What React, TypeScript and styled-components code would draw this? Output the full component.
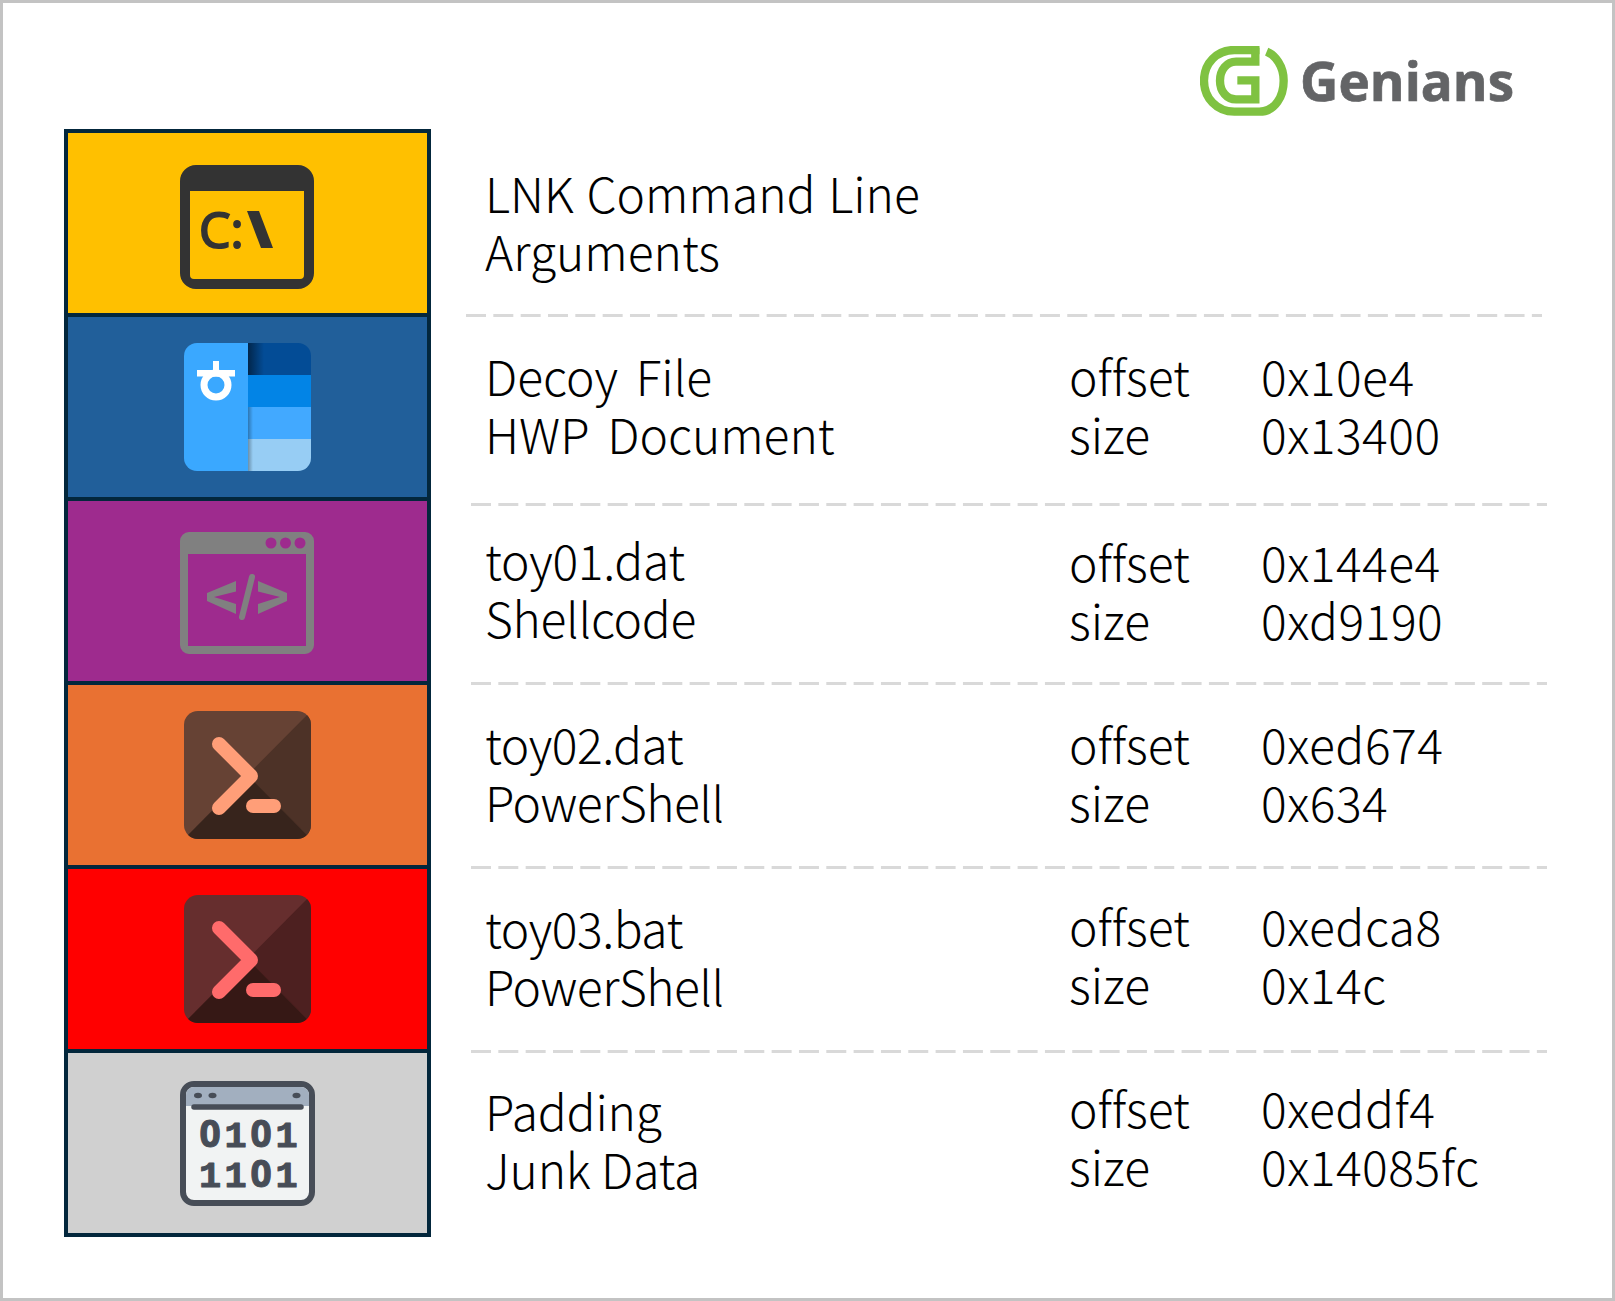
import React from "react";
import styled, { createGlobalStyle } from "styled-components";

const Global = createGlobalStyle`
  html, body { margin: 0; padding: 0; background: #fff; }
  body { font-family: "Noto Sans CJK KR", "Open Sans", sans-serif; }
`;

const Page = styled.div`
  width: 1615px;
  height: 1301px;
  box-sizing: border-box;
  border: 3px solid #c3c3c3;
  background: #fff;
  display: flex;
  flex-direction: column;
`;

const Header = styled.header`
  height: 126px;
  flex: none;
  display: flex;
  justify-content: flex-end;
  padding: 43px 98px 0 0;
  box-sizing: border-box;
`;

const Body = styled.main`
  display: flex;
  align-items: flex-start;
  padding-left: 61px;
`;

const Stack = styled.div`
  width: 367px;
  flex: none;
  box-sizing: border-box;
  border: 4px solid #03273c;
  background: #03273c;
  display: flex;
  flex-direction: column;
  gap: 4px;
`;

const Cell = styled.div<{ $bg: string; $down: number; $left: number }>`
  height: 180px;
  box-sizing: border-box;
  padding: ${(p) => p.$down * 2}px ${(p) => p.$left}px 0 0;
  background: ${(p) => p.$bg};
  display: flex;
  align-items: center;
  justify-content: center;
`;

const Details = styled.div`
  flex: 1;
  display: flex;
  flex-direction: column;
  padding-left: 35px;
`;

const Row = styled.div<{ $h: number }>`
  height: ${(p) => p.$h}px;
  box-sizing: border-box;
  width: 1076px;
  display: grid;
  grid-template-columns: 583px 192px 1fr;
`;

const Dash = styled.svg<{ $nudge: number }>`
  display: block;
  width: 1076px;
  height: 3px;
  margin-left: ${(p) => p.$nudge}px;
  flex: none;
`;

const Lines = styled.div<{ $top: number; $pad: number; $track?: number; $ws?: number }>`
  padding-top: ${(p) => p.$top}px;
  padding-left: ${(p) => p.$pad}px;
  font-family: "Noto Sans CJK KR", "Open Sans", sans-serif;
  font-size: 48px;
  font-weight: 300;
  line-height: 58px;
  letter-spacing: ${(p) => p.$track ?? 0}px;
  word-spacing: ${(p) => p.$ws ?? 0}px;
  font-variant-ligatures: none;
  color: #000;
  white-space: pre;
`;

const Logo = styled.div`
  display: flex;
  align-items: center;
  gap: 12px;
  height: 70px;
`;

const Wordmark = styled.span`
  font-family: "Open Sans", sans-serif;
  font-weight: 700;
  font-size: 53px;
  line-height: 70px;
  color: #636466;
  -webkit-text-stroke: 0.7px #636466;
`;

const Svg = styled.svg`
  display: block;
`;

const GeniansMark = () => (
  <Svg width="88" height="70" viewBox="0 0 264 210" fill="none" stroke="#7fc241" strokeWidth="25">
    <path d="M166 0V12H103C50 12 12 52 12 104S50 197 103 197H178C226 197 251 150 251 104C251 60 226 28 200 17" />
    <path d="M166 5V47H108C80 47 60 72 60 104S80 160 108 160H166V103H112" />
  </Svg>
);

const CmdIcon = () => (
  <Svg width="134" height="124" viewBox="0 0 134 124">
    <path
      fillRule="evenodd"
      fill="#333333"
      d="M16 0H118A16 16 0 0 1 134 16V108A16 16 0 0 1 118 124H16A16 16 0 0 1 0 108V16A16 16 0 0 1 16 0ZM10 26V110A4 4 0 0 0 14 114H120A4 4 0 0 0 124 110V26Z"
    />
    <text x="19" y="83" fontFamily="'Open Sans', sans-serif" fontWeight="400" fontSize="50" fill="#333333" stroke="#333333" strokeWidth="2">C:</text>
    <path d="M67 46H79L93 83H81Z" fill="#333333" />
  </Svg>
);

const HwpIcon = () => (
  <Svg width="127" height="128" viewBox="0 0 127 128">
    <defs>
      <linearGradient id="sh1" x1="0" x2="1" y1="0" y2="0">
        <stop offset="0" stopColor="#000" stopOpacity="0.5" />
        <stop offset="1" stopColor="#000" stopOpacity="0" />
      </linearGradient>
      <clipPath id="round">
        <rect width="127" height="128" rx="13" />
      </clipPath>
    </defs>
    <g clipPath="url(#round)">
      <rect x="64" y="0" width="63" height="32" fill="#034c96" />
      <rect x="64" y="32" width="63" height="32" fill="#0284e6" />
      <rect x="64" y="64" width="63" height="32" fill="#42a9ff" />
      <rect x="64" y="96" width="63" height="32" fill="#97cdf4" />
      <rect x="64" y="0" width="16" height="32" fill="url(#sh1)" />
      <rect x="64" y="64" width="5" height="64" fill="url(#sh1)" opacity="0.6" />
      <rect x="0" y="0" width="64" height="128" fill="#3aa8ff" />
    </g>
    <rect x="29" y="18" width="6" height="10" fill="#fff" />
    <rect x="13" y="27" width="38" height="6.500" fill="#fff" />
    <circle cx="32" cy="42" r="12" fill="none" stroke="#fff" strokeWidth="7" />
  </Svg>
);

const CodeIcon = () => (
  <Svg width="134" height="122" viewBox="0 0 134 122">
    <path
      fillRule="evenodd"
      fill="#808080"
      d="M9 0H125A9 9 0 0 1 134 9V113A9 9 0 0 1 125 122H9A9 9 0 0 1 0 113V9A9 9 0 0 1 9 0ZM8 22V114H126V22Z"
    />
    <circle cx="91" cy="11" r="5.500" fill="#9e2b8e" />
    <circle cx="105.500" cy="11" r="5.500" fill="#9e2b8e" />
    <circle cx="120" cy="11" r="5.500" fill="#9e2b8e" />
    <path d="M56 49V59.500L34 65L56 72V82L27 69V61Z" fill="#808080" />
    <path d="M78 49V59.500L100 65L78 72V82L107 69V61Z" fill="#808080" />
    <path d="M72 45L62 85" stroke="#808080" strokeWidth="6" strokeLinecap="round" />
  </Svg>
);

const ShellIcon = ({ a, b, c, fg, id }: { a: string; b: string; c: string; fg: string; id: string }) => (
  <Svg width="127" height="128" viewBox="0 0 127 128">
    <defs>
      <clipPath id={id}>
        <rect width="127" height="128" rx="14" />
      </clipPath>
    </defs>
    <g clipPath={`url(#${id})`}>
      <rect width="127" height="128" fill={a} />
      <path d="M127 0L63.500 64L127 128Z" fill={b} />
      <path d="M0 128L63.500 64L127 128Z" fill={c} />
    </g>
    <path d="M35 33L67 65L35 97" fill="none" stroke={fg} strokeWidth="14" strokeLinecap="round" strokeLinejoin="round" />
    <path d="M69 95H90" fill="none" stroke={fg} strokeWidth="14" strokeLinecap="round" />
  </Svg>
);

const Digit = styled.tspan<{ $zero: boolean }>`
  font-family: ${(p) => (p.$zero ? '"Open Sans"' : '"Liberation Mono"')}, monospace;
`;

const BinRow = ({ y, s }: { y: number; s: string }) => (
  <text y={y} fontWeight="700" fontSize="37" fill="#474d57" stroke="#474d57" strokeWidth="1" strokeLinejoin="round" textAnchor="middle">
    {s.split("").map((d, i) => (
      <Digit key={i} $zero={d === "0"} x={30 + i * 25.500} y={y}>
        {d}
      </Digit>
    ))}
  </text>
);

const BinaryIcon = () => (
  <Svg width="135" height="125" viewBox="0 0 135 125">
    <rect x="3" y="3" width="129" height="119" rx="11" fill="#f1f3f3" stroke="#474d57" strokeWidth="6" />
    <path d="M6 25V14A8 8 0 0 1 14 6H121A8 8 0 0 1 129 14V25Z" fill="#a2afbf" />
    <path d="M14 26H121" stroke="#474d57" strokeWidth="5.500" strokeLinecap="round" />
    <ellipse cx="18" cy="14.500" rx="4" ry="2.700" fill="#474d57" />
    <ellipse cx="32.500" cy="14.500" rx="4" ry="2.700" fill="#474d57" />
    <ellipse cx="116.500" cy="14.500" rx="4" ry="2.700" fill="#474d57" />
    <BinRow y={66} s="0101" />
    <BinRow y={106} s="1101" />
  </Svg>
);

type R = { h: number; nudge: number; l: string; lt: number; ws?: number; track?: number; vt?: number; o?: string };

const rows: R[] = [
  { h: 185, nudge: 0, lt: 34, ws: 2, l: "LNK Command Line\nArguments" },
  { h: 186, nudge: 0, lt: 29, ws: 7, l: "Decoy File\nHWP Document", o: "0x10e4\n0x13400", vt: 29 },
  { h: 176, nudge: 5, lt: 24, track: -0.3, l: "toy01.dat\nShellcode", o: "0x144e4\n0xd9190", vt: 26 },
  { h: 181, nudge: 5, lt: 29, track: -0.5, l: "toy02.dat\nPowerShell", o: "0xed674\n0x634", vt: 29 },
  { h: 181, nudge: 5, lt: 29, track: -0.5, l: "toy03.bat\nPowerShell", o: "0xedca8\n0x14c", vt: 27 },
  { h: 180, nudge: 5, lt: 28, track: -0.2, l: "Padding\nJunk Data", o: "0xeddf4\n0x14085fc", vt: 25 },
];

const icons = [
  { bg: "#ffc000", down: 4, left: 1, el: <CmdIcon /> },
  { bg: "#215f9a", down: 0, left: 0, el: <HwpIcon /> },
  { bg: "#9e2b8e", down: 2, left: 1, el: <CodeIcon /> },
  { bg: "#e97132", down: 0, left: 1, el: <ShellIcon id="s1" a="#664234" b="#4d3227" c="#37241c" fg="#ff9e78" /> },
  { bg: "#ff0000", down: 0, left: 1, el: <ShellIcon id="s2" a="#662e2e" b="#4d2020" c="#361815" fg="#ff6b6b" /> },
  { bg: "#d0d0d0", down: 0, left: 0, el: <BinaryIcon /> },
];

export default function App() {
  return (
    <Page>
      <Global />
      <Header>
        <Logo>
          <GeniansMark />
          <Wordmark>Genians</Wordmark>
        </Logo>
      </Header>
      <Body>
        <Stack>
          {icons.map((c, i) => (
            <Cell key={i} $bg={c.bg} $down={c.down} $left={c.left}>
              {c.el}
            </Cell>
          ))}
        </Stack>
        <Details>
          {rows.map((r, i) => (
            <React.Fragment key={i}>
              <Row $h={r.h}>
                <Lines $top={r.lt} $pad={19} $ws={r.ws} $track={r.track}>{r.l}</Lines>
                {r.o ? <Lines $top={r.vt ?? 0} $pad={20}>{"offset\nsize"}</Lines> : <span />}
                {r.o ? <Lines $top={r.vt ?? 0} $pad={20} $track={0.5}>{r.o}</Lines> : <span />}
              </Row>
              {i < rows.length - 1 && (
                <Dash $nudge={rows[i + 1].nudge} viewBox="0 0 1076 3">
                  <line x1="0" x2="1076" y1="1.5" y2="1.5" stroke="#d9d9d9" strokeWidth="3" strokeDasharray="20 7.330" />
                </Dash>
              )}
            </React.Fragment>
          ))}
        </Details>
      </Body>
    </Page>
  );
}
